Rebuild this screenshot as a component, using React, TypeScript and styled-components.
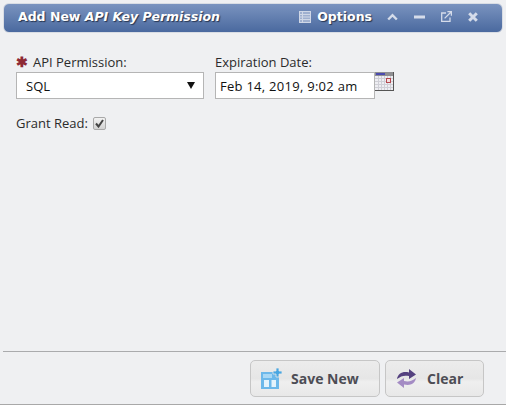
import React from "react";
import styled, { createGlobalStyle } from "styled-components";

const GlobalStyle = createGlobalStyle`
  html, body {
    margin: 0;
    padding: 0;
    background: #eff0f2;
  }
  body {
    font-family: "Open Sans", "Liberation Sans", sans-serif;
    font-size: 13px;
    color: #222;
  }
`;

const Win = styled.div`
  width: 506px;
  height: 405px;
  box-sizing: border-box;
  display: flex;
  flex-direction: column;
  padding-top: 3px;
  border-bottom: 1px solid #a8a8a8;
  overflow: hidden;
`;

const TitleBar = styled.header`
  height: 30px;
  margin: 0 3px 0 3px;
  box-sizing: border-box;
  display: flex;
  align-items: center;
  padding: 0 24px 3px 14px;
  color: #fff;
  background: linear-gradient(#7a93bf, #4a699f);
  border: 1px solid #d9dde4;
  border-radius: 6px;
  font-family: "DejaVu Sans", sans-serif;
  font-weight: bold;
  font-size: 12.5px;
  text-shadow: 1px 1px 1px #26344f;
`;

const Title = styled.div`
  flex: 1;
  em {
    font-style: italic;
  }
`;

const OptionsBtn = styled.div`
  display: flex;
  align-items: center;
  gap: 6px;
  margin-right: 15px;
`;

const WinButtons = styled.div`
  display: flex;
  align-items: center;
  gap: 16px;
  svg {
    display: block;
  }
`;

const Body = styled.main`
  flex: 1;
  padding: 19px 16px 0;
`;

const Row = styled.div`
  display: flex;
  gap: 11px;
`;

const Field = styled.div`
  display: flex;
  flex-direction: column;
`;

const Label = styled.label`
  display: flex;
  align-items: center;
  gap: 7px;
  height: 20px;
  line-height: 20px;
  color: #2b2b2b;
`;

const Required = styled.span`
  color: #8e2a35;
  font-size: 14px;
  font-weight: bold;
  line-height: 14px;
  width: 10px;
`;

const Control = styled.div<{ $width: number }>`
  width: ${(p) => p.$width}px;
  height: 27px;
  box-sizing: border-box;
  background: #fff;
  border: 1px solid #b5b5b5;
  display: flex;
  align-items: center;
  color: #111;
`;

const SelectBox = styled(Control)`
  justify-content: space-between;
  padding: 0 8px 0 9px;
`;

const DateBox = styled(Control)`
  padding-left: 4px;
  letter-spacing: 0.27px;
`;

const Arrow = styled.span`
  width: 0;
  height: 0;
  border-left: 4px solid transparent;
  border-right: 4px solid transparent;
  border-top: 7px solid #111;
`;

const DateWrap = styled.div`
  display: flex;
  align-items: flex-start;
`;

const GrantRow = styled.div`
  display: flex;
  align-items: center;
  gap: 5px;
  margin-top: 15px;
  height: 18px;
  color: #2b2b2b;
`;

const CheckBox = styled.span`
  width: 13px;
  height: 13px;
  box-sizing: border-box;
  border: 1px solid #a9a9a9;
  border-radius: 2px;
  background: linear-gradient(#f2f2f2, #d2d2d2);
  display: flex;
  align-items: center;
  justify-content: center;
`;

const Footer = styled.footer`
  height: 53px;
  margin-left: 3px;
  border-top: 1px solid #aaabad;
  box-sizing: border-box;
  display: flex;
  justify-content: flex-end;
  gap: 5px;
  padding: 8px 22px 0 0;
`;

const ActionBtn = styled.button<{ $width: number; $gap: number }>`
  width: ${(p) => p.$width}px;
  height: 37px;
  box-sizing: border-box;
  display: flex;
  align-items: center;
  gap: ${(p) => p.$gap}px;
  padding: 0 0 0 10px;
  border: 1px solid #c6c6c6;
  border-radius: 5px;
  background: linear-gradient(#ececec 0%, #e6e6e6 50%, #efefef 60%, #e8e8e8 100%);
  color: #4d4d55;
  font-family: "Open Sans", "Liberation Sans", sans-serif;
  font-size: 14px;
  font-weight: bold;
`;

const ListIcon = () => (
  <svg width="12" height="12" viewBox="0 0 12 12">
    <rect x="0.5" y="0.5" width="11" height="11" fill="#9fb0cf" stroke="#cfd7e6" />
    <path d="M1 3.5h10M1 6h10M1 8.5h10M3.5 1v10" stroke="#cfd7e6" />
  </svg>
);

const ChevronGlyph = () => (
  <svg width="11" height="8" viewBox="0 0 11 8" fill="none">
    <path d="M1.2 6.5L5.5 2.2l4.3 4.3" stroke="#d5dcea" strokeWidth="2.4" />
  </svg>
);

const MinusGlyph = () => (
  <svg width="11" height="4" viewBox="0 0 11 4">
    <rect y="0.5" width="11" height="3" fill="#d5dcea" />
  </svg>
);

const PopoutGlyph = () => (
  <svg width="11" height="11" viewBox="0 0 11 11" fill="none" stroke="#d5dcea" strokeWidth="1.3">
    <path d="M5 2H.7v8.3H9V6.5" />
    <path d="M3.6 7.4L9.8 1.2M6.4 .7h4v4" />
  </svg>
);

const CloseGlyph = () => (
  <svg width="10" height="10" viewBox="0 0 10 10" fill="none">
    <path d="M1.2 1.2l7.6 7.6M8.8 1.2L1.2 8.8" stroke="#d5dcea" strokeWidth="3" />
  </svg>
);

const CalendarIcon = () => (
  <svg width="19" height="19" viewBox="0 0 19 19">
    <rect x="0" y="0" width="19" height="19" fill="#eeeef2" />
    <path
      d="M0 6.5h18M0 9.5h18M0 12.5h18M0 15.5h18M3.5 3v15M6.5 3v15M9.5 3v15M12.5 3v15M15.5 3v15"
      stroke="#cfcfd6"
    />
    <rect x="0" y="0" width="19" height="4" fill="#8f8f92" />
    <rect x="1" y="1" width="9" height="2" fill="#4b4bb0" />
    <rect x="11.5" y="6.5" width="4" height="4" fill="#f3dede" stroke="#b4474f" />
    <path d="M18.5 0v19M0 18.5h19" stroke="#555" />
  </svg>
);

const SaveIcon = () => (
  <svg width="21" height="21" viewBox="0 0 21 21">
    <path d="M0 4h18v17H0z" fill="#6cb8ea" />
    <path d="M2 6h9v4H2z" fill="#a9d8f5" />
    <path d="M3 12h12v7H3z" fill="#e4f3fc" />
    <path d="M8 12h2.5v7H8z" fill="#6cb8ea" />
    <path d="M15 0h3v3h3v3h-3v3h-3V6h-3V3h3z" fill="#47a6e2" stroke="#e8e8e8" strokeWidth="0.8" />
  </svg>
);

const ClearIcon = () => (
  <svg width="21" height="21" viewBox="0 0 21 21">
    <path d="M1 11C2 5 7 3 13 4.5V1l7 5.5-7 4.5V8C8 7 5 8 1 11z" fill="#54417f" />
    <path d="M20 10c-1 6-6 8-12 6.5V20l-7-5.5L8 10v3c5 1 8 0 12-3z" fill="#a48cc4" />
  </svg>
);

export default function App() {
  return (
    <Win>
      <GlobalStyle />
      <TitleBar>
        <Title>
          Add New <em>API Key Permission</em>
        </Title>
        <OptionsBtn>
          <ListIcon />
          Options
        </OptionsBtn>
        <WinButtons>
          <ChevronGlyph />
          <MinusGlyph />
          <PopoutGlyph />
          <CloseGlyph />
        </WinButtons>
      </TitleBar>
      <Body>
        <Row>
          <Field>
            <Label>
              <Required>✱</Required>
              API Permission:
            </Label>
            <SelectBox $width={188}>
              SQL
              <Arrow />
            </SelectBox>
          </Field>
          <Field>
            <Label>Expiration Date:</Label>
            <DateWrap>
              <DateBox $width={160}>Feb 14, 2019, 9:02 am</DateBox>
              <CalendarIcon />
            </DateWrap>
          </Field>
        </Row>
        <GrantRow>
          Grant Read:
          <CheckBox>
            <svg width="9" height="9" viewBox="0 0 9 9" fill="none">
              <path d="M1 4.5l2.5 3L8 1" stroke="#444" strokeWidth="2" />
            </svg>
          </CheckBox>
        </GrantRow>
      </Body>
      <Footer>
        <ActionBtn $width={130} $gap={9}>
          <SaveIcon />
          Save New
        </ActionBtn>
        <ActionBtn $width={99} $gap={10}>
          <ClearIcon />
          Clear
        </ActionBtn>
      </Footer>
    </Win>
  );
}
